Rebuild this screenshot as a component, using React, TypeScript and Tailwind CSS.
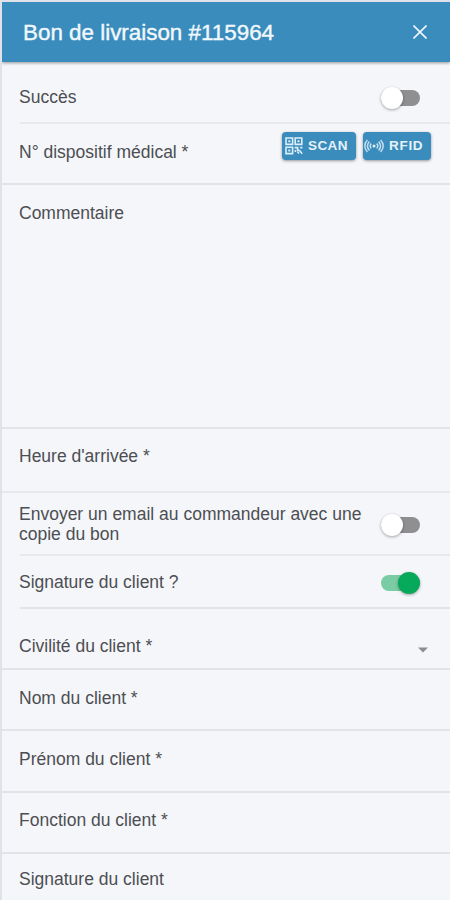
import { useState } from "react";

interface ToggleProps {
  checked: boolean;
  label: string;
  onChange: (checked: boolean) => void;
}

function Toggle({ checked, label, onChange }: ToggleProps) {
  return (
    <button
      role="switch"
      aria-checked={checked}
      aria-label={label}
      onClick={() => onChange(!checked)}
      className={`mr-[30px] flex h-4 w-[39px] shrink-0 items-center rounded-full ${
        checked ? "justify-end bg-[#7acca4]" : "justify-start bg-[#8f8f91]"
      }`}
    >
      <span
        className={`h-[22px] w-[22px] shrink-0 rounded-full shadow-[0_1px_3px_rgba(0,0,0,0.35)] ${
          checked ? "bg-[#06a85a]" : "bg-white"
        }`}
      />
    </button>
  );
}

function CloseIcon() {
  return (
    <svg width="14" height="14" viewBox="0 0 14 14" fill="none" stroke="#f1f8fd" strokeWidth="1.6">
      <path d="M0.5 0.5l13 13M13.5 0.5l-13 13" />
    </svg>
  );
}

function QrIcon() {
  return (
    <svg width="18" height="18" viewBox="0 0 18 18" fill="none" stroke="#dceefa" strokeWidth="1.6">
      <path d="M1 1h6.6v6.4H1zM10.2 1h6.6v6.4h-6.6zM1 10.2h6.6v6.4H1z" />
      <path d="M3.3 4.2h2M12.5 4.2h2M3.3 13.4h2" strokeWidth="2" />
      <path d="M9.6 10.6h3v2.6h2M15.2 10.6h2.2M10.4 13v2M12.4 14.6l1.6 2M14.6 13.6l2.6 3.2" />
    </svg>
  );
}

function RfidIcon() {
  return (
    <svg width="20" height="14" viewBox="0 0 20 14" fill="none" stroke="#c5dff0" strokeWidth="1.5">
      <path d="M3.4 1C0 4.5 0 9.5 3.4 13M5.4 2.6C2.8 5 2.8 9 5.4 11.4M7.3 4.6C5.8 6 5.8 8 7.3 9.4" />
      <path d="M16.6 1C20 4.5 20 9.5 16.6 13M14.6 2.6C17.2 5 17.2 9 14.6 11.4M12.7 4.6C14.2 6 14.2 8 12.7 9.4" />
      <circle cx="10" cy="7" r="1.5" fill="#dceefa" stroke="none" />
    </svg>
  );
}

const actionClass =
  "flex h-7 items-center rounded-[4px] bg-[#3a8cbc] text-[13.5px] font-bold text-[#e6f2fa] shadow-[0_1px_3px_rgba(0,0,0,0.4)]";

const clientFields = ["Nom du client *", "Prénom du client *", "Fonction du client *"];

export default function App() {
  const [success, setSuccess] = useState(false);
  const [sendEmail, setSendEmail] = useState(false);
  const [signature, setSignature] = useState(true);

  return (
    <div className="h-[900px] w-[450px] overflow-hidden border-t-2 border-l-2 border-[#dfe2e8] bg-[#f4f6fa] font-['Liberation_Sans',Arial,sans-serif] text-[17.5px] leading-5 text-[#4d4e52]">
      <header className="flex h-[60px] items-center justify-between bg-[#3a8cbc] pr-[23px] pl-[21px] shadow-[0_1px_3px_rgba(0,0,0,0.4)]">
        <h1 className="pt-[2px] text-[22.4px] text-[#f1f8fd] [-webkit-text-stroke:0.4px_#f1f8fd]">
          Bon de livraison #115964
        </h1>
        <button aria-label="Fermer">
          <CloseIcon />
        </button>
      </header>

      <div className="ml-[18px] flex h-[62px] items-center justify-between border-b-2 border-[#e6e8eb] pt-[11px]">
        <span className="-ml-px pb-[2px]">Succès</span>
        <Toggle checked={success} label="Succès" onChange={setSuccess} />
      </div>

      <div className="flex h-[61px] items-start justify-between border-b-2 border-[#e2e4e8] pr-[19px] pl-[17px]">
        <span className="pt-[18px]">N° dispositif médical *</span>
        <div className="flex gap-[7px] pt-[8px]">
          <button className={`${actionClass} w-[74px] gap-[5px] pl-[3px]`}>
            <QrIcon />
            <span className="tracking-[0.4px]">SCAN</span>
          </button>
          <button className={`${actionClass} w-[68px] gap-[5px] pl-[1px]`}>
            <RfidIcon />
            <span className="tracking-[0.7px]">RFID</span>
          </button>
        </div>
      </div>

      <div className="h-[244px] border-b-2 border-[#e2e4e8] pt-[18px] pl-[17px]">Commentaire</div>

      <div className="h-16 border-b-2 border-[#e6e8eb] pt-[17px] pl-[17px]">Heure d'arrivée *</div>

      <div className="ml-[18px] flex h-[63px] items-center justify-between border-b-2 border-[#e6e8eb] pt-[2px]">
        <span className="-ml-px w-[350px] pb-[2px]">Envoyer un email au commandeur avec une copie du bon</span>
        <Toggle checked={sendEmail} label="Envoyer un email" onChange={setSendEmail} />
      </div>

      <div className="ml-[18px] flex h-[53px] items-center justify-between border-b-2 border-[#e2e4e8] pt-[2px]">
        <span className="-ml-px pb-[2px]">Signature du client ?</span>
        <Toggle checked={signature} label="Signature du client" onChange={setSignature} />
      </div>

      <div className="flex h-[61px] items-end justify-between border-b-2 border-[#e2e4e8] pr-[22px] pb-[12px] pl-[17px]">
        <span>Civilité du client *</span>
        <svg width="10" height="6" viewBox="0 0 10 6" className="mb-[3px]">
          <path d="M0 0.5h10L5 5.5z" fill="#8b8c90" />
        </svg>
      </div>

      {clientFields.map((field) => (
        <div key={field} className="h-[61.3px] border-b-2 border-[#e2e4e8] pt-[17.6px] pl-[17px]">
          {field}
        </div>
      ))}

      <div className="pt-[15px] pl-[17px]">Signature du client</div>
    </div>
  );
}
